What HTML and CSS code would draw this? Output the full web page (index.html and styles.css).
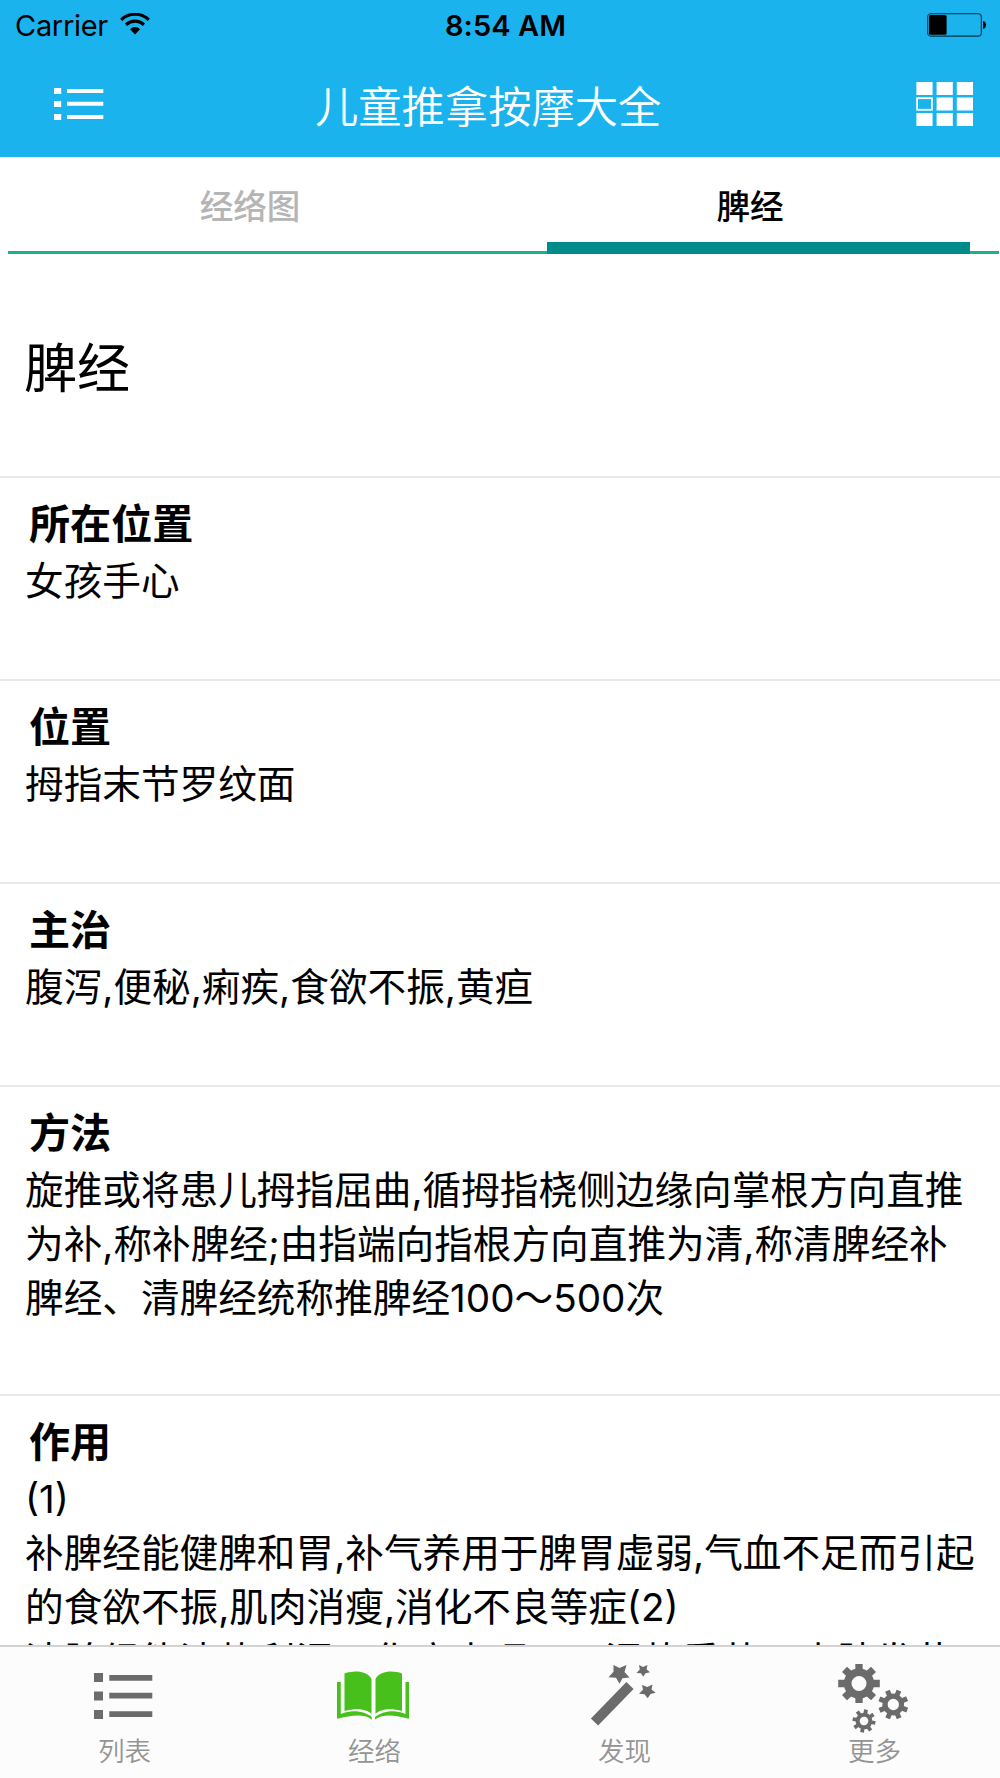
FILE: index.html
```html
<!DOCTYPE html>
<html lang="zh-CN">
<head>
  <meta charset="UTF-8">
  <meta name="viewport" content="width=device-width, initial-scale=1.0">
  <title>儿童推拿按摩大全</title>
  <link rel="stylesheet" href="styles.css">
</head>
<body>

  <div class="app">
    <header class="header">
      <div class="status">
        <div class="carrier">
          <span>Carrier</span>
          <svg class="wifi" width="30" height="22" viewBox="0 0 30 22">
            <path d="M1.2 6.8C9 -0.6 21 -0.6 28.8 6.8" fill="none" stroke="#000" stroke-width="3.2"/>
            <path d="M6 11.8C11.2 7 18.8 7 24 11.8" fill="none" stroke="#000" stroke-width="3.2"/>
            <path d="M10 16.2C12.8 13.4 17.2 13.4 20 16.2L15 21.4Z"/>
          </svg>
        </div>
        <span class="time">8:54 AM</span>
        <svg class="battery" width="60" height="24" viewBox="0 0 60 24">
          <rect x="0.7" y="0.7" width="53.6" height="22.4" rx="3.2" fill="none" stroke="#06364a" stroke-width="1.1"/>
          <rect x="2" y="2" width="17.6" height="19.8" rx="1.5"/>
          <path d="M56 8C60 9 60 15 56 16Z"/>
        </svg>
      </div>
      <nav class="navbar">
        <svg class="menu" width="50" height="34" viewBox="0 0 50 34" fill="#fff">
          <path d="M0 1h7.2v6H0zM0 14h7.2v6H0zM0 27h7.2v6H0zM13 2h36.3v4H13zM13 14.7h36.3v4H13zM13 28h36.3v4H13z"/>
        </svg>
        <h1 class="title">儿童推拿按摩大全</h1>
        <svg class="grid" width="58" height="46" viewBox="0 0 58 46" fill="#fff">
          <path d="M.4 1h16.2v13H.4zM20.6 1h16.2v13H20.6zM40.8 1h16.2v13H40.8zM20.6 16.5h16.2v13H20.6zM40.8 16.5h16.2v13H40.8zM.4 32h16.2v13H.4zM20.6 32h16.2v13H20.6zM40.8 32h16.2v13H40.8z"/>
          <rect x="1.1" y="17.2" width="14.8" height="11.6" fill="none" stroke="#fff" stroke-width="1.8"/>
        </svg>
      </nav>
    </header>

    <div class="tabs">
      <div class="tab">经络图</div>
      <div class="tab active">脾经</div>
    </div>

    <main class="content">
      <div class="name">脾经</div>
      <section class="item">
        <h2>所在位置</h2>
        <p>女孩手心</p>
      </section>
      <section class="item">
        <h2>位置</h2>
        <p>拇指末节罗纹面</p>
      </section>
      <section class="item">
        <h2>主治</h2>
        <p>腹泻,便秘,痢疾,食欲不振,黄疸</p>
      </section>
      <section class="item method">
        <h2>方法</h2>
        <p>旋推或将患儿拇指屈曲,循拇指桡侧边缘向掌根方向直推<br>为补,称补脾经;由指端向指根方向直推为清,称清脾经补<br>脾经、清脾经统称推脾经100～500次</p>
      </section>
      <section class="item effect">
        <h2>作用</h2>
        <p>(1)<br>补脾经能健脾和胃,补气养用于脾胃虚弱,气血不足而引起<br>的食欲不振,肌肉消瘦,消化不良等症(2)<br>清脾经能清热利湿，化痰止呕用于湿热熏蒸，皮肤发黄</p>
      </section>
    </main>

    <footer class="tabbar">
      <div class="bar-item">
        <svg class="icon" width="76" height="72" viewBox="0 0 76 72" fill="#6b6b6b">
          <path d="M7 11h9v9H7zM7 29.5h9v9H7zM7 48h9v9H7zM22.3 13h43v5.8h-43zM22.3 30.8h43v5.8h-43zM22.3 49.3h43v5.8h-43z"/>
        </svg>
        <span>列表</span>
      </div>
      <div class="bar-item">
        <svg class="icon" width="76" height="72" viewBox="0 0 76 72" fill="#47c01b">
          <path d="M7.500 11.500C18 8 30 9 34.500 17V52C30 47 19 46 7.500 49Z"/>
          <path d="M65 11.500C55 8 43 9 38.500 17V52C43 47 54 46 65 49Z"/>
          <path d="M0 20h3.800v32C15 47 28 49 34.800 55V57.500C25 51 14 54 0 56.800Z"/>
          <path d="M72 20h-3.500v32C58 47 45 49 38 55V57.500C48 51 59 54 72 56.800Z"/>
        </svg>
        <span>经络</span>
      </div>
      <div class="bar-item">
        <svg class="icon" width="76" height="72" viewBox="0 0 76 72" fill="#6b6b6b">
          <path d="M7.500 60L43 23.500" stroke="#6b6b6b" stroke-width="10"/>
          <path d="M26.500 3l6 3 7-3-2 7 5 5.500-7 .8-3 5.500-3.500-6-7.500-.5 5-5.500z"/>
          <path d="M52 3l4 2 4.500-2-1 4.300 3.500 3-4.500 1-2.300 3.500-2.200-3.500-4.500-.3 3.300-3.500z"/>
          <path d="M55 23l5.300 2 5.200-2.500-1 5 4.200 3.300-5.200 1.300-2.800 4.200-3.200-4-5.500-.5 4-4z"/>
        </svg>
        <span>发现</span>
      </div>
      <div class="bar-item">
        <svg class="icon" width="76" height="72" viewBox="0 0 76 72" fill="none" stroke="#6b6b6b">
          <g transform="translate(22 21.500)">
            <circle r="11.300" stroke-width="7.600"/>
            <path d="M0-13V-19.500M9.500-9.500L14.500-14.200M13 0H20.800M9.500 9.500L14.500 14.200M0 13V19.500M-9.500 9.500L-14.500 14.200M-13 0H-20.800M-9.500-9.500L-14.500-14.200" stroke-width="7.300"/>
          </g>
          <g transform="translate(56.300 42.500) rotate(22)">
            <circle r="8.300" stroke-width="5.200"/>
            <path d="M0-9V-15M6.500-6.500L10.600-10.600M9 0H15M6.500 6.500L10.600 10.600M0 9V15M-6.500 6.500L-10.600 10.600M-9 0H-15M-6.500-6.500L-10.600-10.600" stroke-width="5"/>
          </g>
          <g transform="translate(27 59) rotate(10)">
            <circle r="6.300" stroke-width="4"/>
            <path d="M0-7V-11.500M5-5L8.200-8.200M7 0H11.500M5 5L8.200 8.200M0 7V11.500M-5 5L-8.200 8.200M-7 0H-11.500M-5-5L-8.200-8.200" stroke-width="3.800"/>
          </g>
        </svg>
        <span>更多</span>
      </div>
    </footer>
  </div>

</body>
</html>
```
FILE: styles.css
```css
* {
  box-sizing: border-box;
}

body {
  margin: 0;
  font-family: Inter, "Noto Sans CJK SC", sans-serif;
  color: #000;
  background: #fff;
  overflow: hidden;
}

h1, h2, p {
  margin: 0;
}

svg {
  display: block;
  flex: none;
}

.app {
  display: flex;
  flex-direction: column;
  height: 1778px;
}

/* header */
.header {
  height: 157px;
  flex: none;
  background: #1ab3ee;
}

.status {
  display: grid;
  grid-template-columns: 1fr auto 1fr;
  align-items: center;
  height: 50px;
  padding: 0 13px 0 15px;
  font-size: 29px;
}

.carrier {
  display: flex;
  align-items: center;
  gap: 12px;
  letter-spacing: -0.3px;
}

.wifi {
  margin-top: -3px;
}

.time {
  font-weight: 600;
  letter-spacing: 0.1px;
  padding-left: 9px;
}

.battery {
  justify-self: end;
}

.navbar {
  display: flex;
  align-items: center;
  height: 107px;
  padding: 0 26px 0 54px;
}

.menu {
  margin-top: 1px;
}

.title {
  margin: 7px auto 0 211px;
  font-size: 43.3px;
  font-weight: 350;
  line-height: 60px;
  color: #fff;
}

/* tabs */
.tabs {
  display: flex;
  height: 97px;
  flex: none;
  margin: 0 1px 0 8px;
  padding: 0 29px 0 0;
  border-bottom: 3px solid #1cb18e;
}

.tab {
  width: 484px;
  margin-right: 56px;
  padding-left: 1px;
  font-size: 33.6px;
  font-weight: 500;
  line-height: 100px;
  text-align: center;
  color: #b5b5b5;
}

.tab.active {
  flex: none;
  width: 423px;
  height: 97px;
  margin-right: 0;
  padding: 0 17px 0 0;
  color: #000;
  background: linear-gradient(#008b8b, #008b8b) bottom / 100% 12px no-repeat;
}

/* content */
.content {
  flex: 1;
  min-height: 0;
  overflow: hidden;
}

.name {
  height: 222px;
  padding: 79px 24px 0;
  font-size: 53.1px;
  line-height: 72px;
}

.item {
  height: 203px;
  padding: 18px 0 0 25px;
  border-top: 2px solid #e9e9e9;
  white-space: nowrap;
}

.item h2 {
  padding-left: 4px;
  font-size: 41.1px;
  font-weight: 600;
  line-height: 56px;
}

.item p {
  padding-top: 2px;
  font-size: 38.65px;
  line-height: 54px;
}

.method {
  height: 309px;
}

.effect {
  height: auto;
}

/* bottom bar */
.tabbar {
  display: flex;
  flex: none;
  height: 133px;
  border-top: 2px solid #d3d3d3;
  background: #fcfcfc;
}

.bar-item {
  width: 250px;
  padding: 15px 0 0 87px;
}

.bar-item span {
  display: block;
  margin-left: 11px;
  font-size: 26.6px;
  font-weight: 350;
  line-height: 34px;
  color: #949494;
}
```
